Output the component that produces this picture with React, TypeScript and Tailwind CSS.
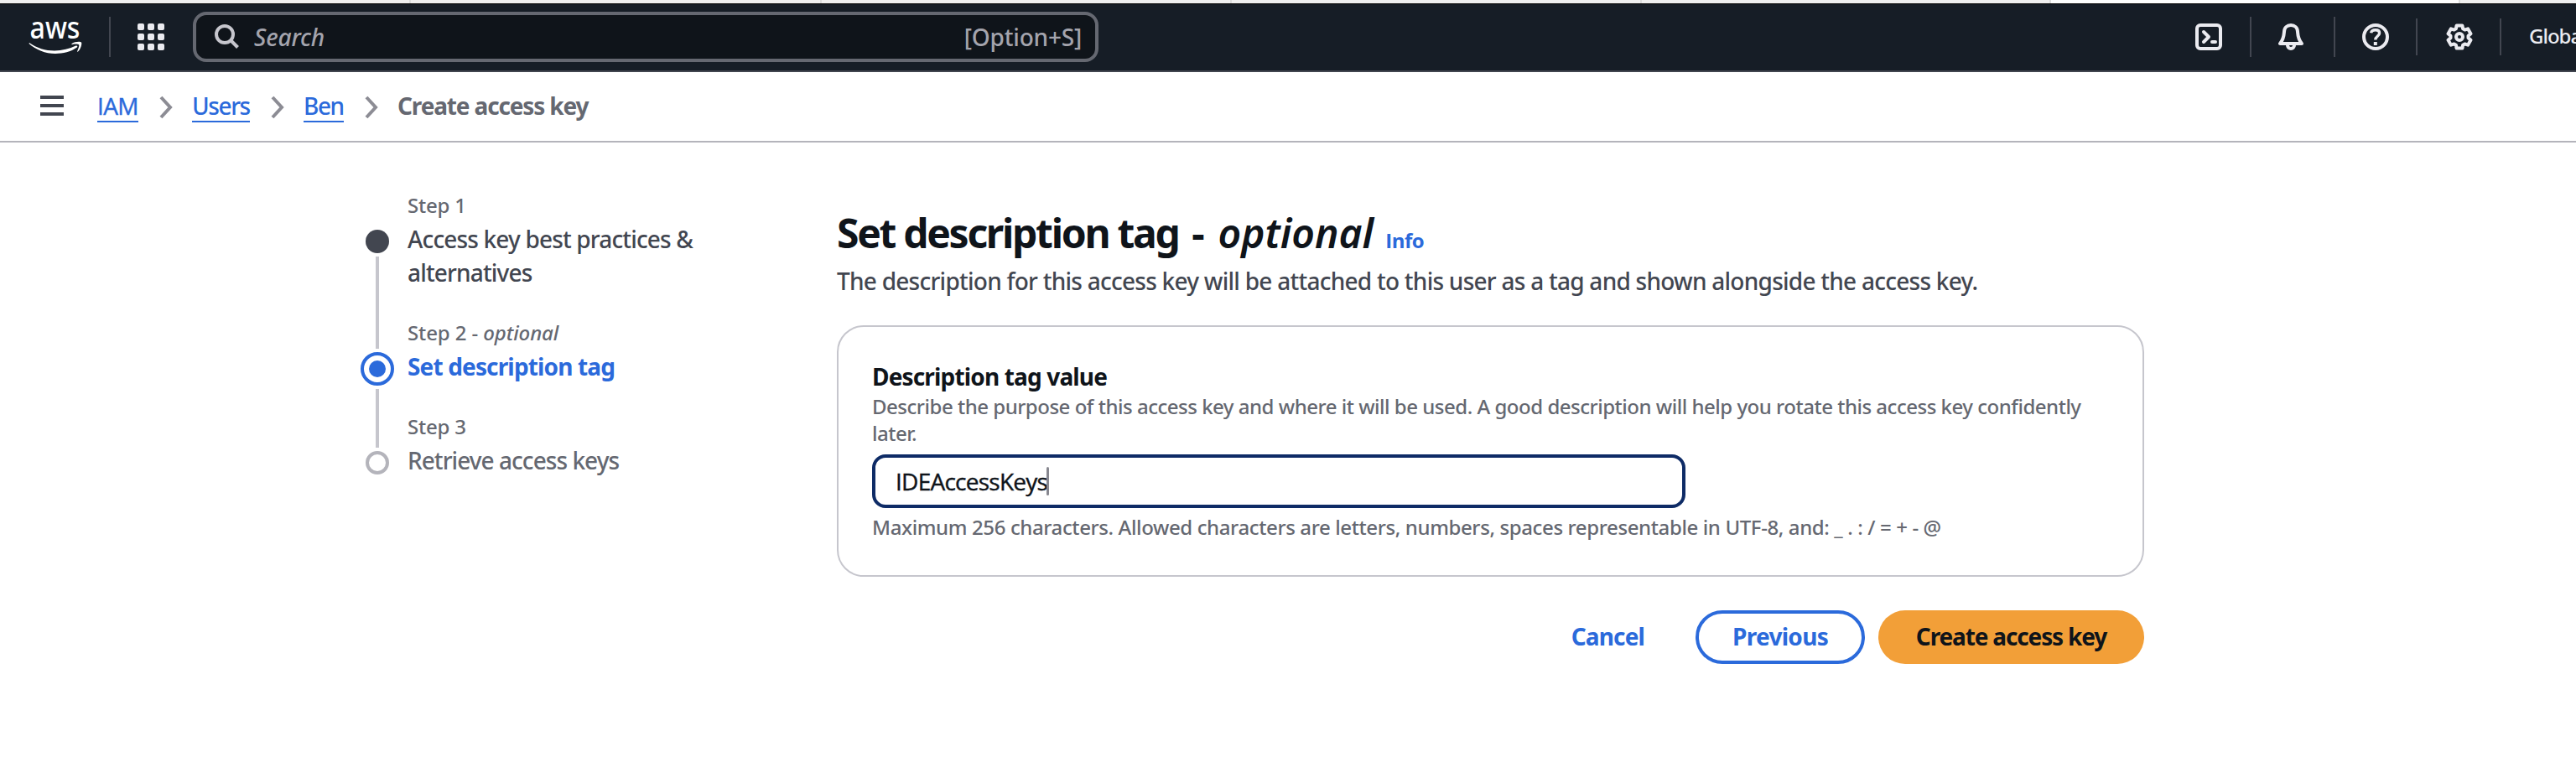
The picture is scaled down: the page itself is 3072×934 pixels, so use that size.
import type { ReactNode } from "react";

const GEAR = Array.from({ length: 6 }, (_, i) => {
  const base = (i * 60 - 90) * (Math.PI / 180);
  const at = (deg: number, r: number) => {
    const a = base + (deg * Math.PI) / 180;
    return `${(16 + r * Math.cos(a)).toFixed(2)} ${(16 + r * Math.sin(a)).toFixed(2)}`;
  };
  return [at(-23, 10.6), at(-14, 14), at(14, 14), at(23, 10.6)].join(" L");
}).join(" L");

function AwsLogo() {
  return (
    <svg width="66" height="58" viewBox="0 -16 66 58" className="overflow-visible text-white">
      <text
        x="1.5"
        y="21.5"
        textLength="60"
        lengthAdjust="spacingAndGlyphs"
        fill="currentColor"
        className="font-['Noto_Sans',sans-serif] text-[36px] font-medium"
      >
        aws
      </text>
      <path
        d="M1 27C10 33.5 20 36.5 31 36.5C40 36.5 49 34.3 56.5 30.6C58 30 59 31.5 57.8 32.6C50.5 38 41 40 32 40C20 40 9 35.5 0.5 28Z"
        fill="currentColor"
      />
      <path
        d="M51.5 28.2C55 25.5 62 25.2 63 26.5C64 28 62.5 34.5 59 37.5C58.4 38 57.8 37.7 58.2 36.9C59.2 34.5 60.8 30.5 60.2 29.4C59.5 28.2 55 28.5 52.2 28.9C51.3 29 51 28.6 51.5 28.2Z"
        fill="currentColor"
      />
    </svg>
  );
}

function GridIcon() {
  const steps = [0, 12, 24];
  return (
    <svg width="32" height="32" viewBox="0 0 32 32" fill="#ebebf0">
      {steps.map((y) => steps.map((x) => <rect key={`${x}-${y}`} x={x} y={y} width="8" height="8" rx="2" />))}
    </svg>
  );
}

function Stroke({ width = 32, children }: { width?: number; children: ReactNode }) {
  return (
    <svg
      width={width}
      height="32"
      viewBox={`0 0 ${width} 32`}
      fill="none"
      stroke="#ebebf0"
      strokeWidth="4"
      strokeLinejoin="round"
      strokeLinecap="round"
      className="shrink-0"
    >
      {children}
    </svg>
  );
}

function Chevron() {
  return (
    <svg width="16" height="28" viewBox="0 0 16 28" fill="none" stroke="#8c8c94" strokeWidth="4" className="mr-[23px] ml-[25px] mt-0.5 shrink-0">
      <path d="M2 2L13 14L2 26" />
    </svg>
  );
}

function Divider({ short = false }: { short?: boolean }) {
  return <div className={short ? "h-11 w-0.5 bg-[#424650]" : "h-12 w-0.5 bg-[#424650]"} />;
}

function BrowserStrip() {
  return (
    <div className="flex h-1 bg-[#efefef]">
      <div className="w-[490px] border-r-2 border-[#dcdcdc]" />
      <div className="w-[490px] border-r-2 border-[#dcdcdc]" />
      <div className="w-[489px] border-r-2 border-[#dcdcdc]" />
      <div className="w-[489px] border-r-2 border-[#dcdcdc]" />
      <div className="w-[488px] border-r-2 border-[#dcdcdc]" />
      <div className="w-[488px] border-r-2 border-[#dcdcdc] bg-[#fdfdfd]" />
    </div>
  );
}

function TopBar() {
  return (
    <header className="h-[82px] border-t border-b-2 border-t-black border-b-[#424650] bg-[#161d26]">
      <div className="flex h-[78px] items-center justify-between">
        <div className="flex items-center">
          <div className="ml-[34px] w-[96px] pb-3.5">
            <AwsLogo />
          </div>
          <Divider />
          <div className="mr-[34px] ml-8">
            <GridIcon />
          </div>
          <div className="flex h-[60px] w-[1080px] items-center justify-between rounded-2xl border-4 border-[#656871] bg-[#0f141a] pr-4 pl-[22px] text-[28px] leading-[40px] font-medium text-[#a4a4ad]">
            <div className="flex items-center">
              <svg width="30" height="30" viewBox="0 0 30 30" fill="none" stroke="#c6c6cd" strokeWidth="4">
                <circle cx="12" cy="12" r="10" />
                <path d="M19 19L27.5 27.5" />
              </svg>
              <span className="ml-[17px] tracking-[-0.15px] italic">Search</span>
            </div>
            <span className="tracking-[-0.2px]">[Option+S]</span>
          </div>
        </div>
        <div className="flex w-[454px] items-center overflow-hidden">
          <Stroke>
            <rect x="2" y="2" width="28" height="28" rx="4" />
            <path d="M10 10L16 16L10 22M20 22H24" />
          </Stroke>
          <div className="mr-8 ml-[33px]">
            <Divider />
          </div>
          <Stroke width={30}>
            <path d="M2 24H28C24.5 20 23.5 17 23 10C23 5 19.5 2 15 2C10.5 2 7 5 7 10C6.5 17 5.5 20 2 24Z" />
            <path d="M11 26a4 4 0 0 0 8 0" />
          </Stroke>
          <div className="mr-8 ml-9">
            <Divider />
          </div>
          <Stroke>
            <circle cx="16" cy="16" r="14" />
            <path d="M10.6 11.2C11 9 13 7.8 15.8 7.8C19 7.8 20.6 9.3 20.6 11.5C20.6 15 15.8 15 15.8 19.5" strokeWidth="3.4" strokeLinecap="butt" />
            <path d="M13.8 24H17.8" strokeLinecap="butt" />
          </Stroke>
          <div className="mr-[34px] ml-8">
            <Divider short />
          </div>
          <Stroke>
            <path d={`M${GEAR}Z`} />
            <circle cx="16" cy="16" r="4" />
          </Stroke>
          <div className="mr-[33px] ml-8">
            <Divider short />
          </div>
          <span className="pb-0.5 text-[24px] leading-8 font-medium tracking-[-1px] whitespace-nowrap text-[#ebebf0]">Global</span>
        </div>
      </div>
    </header>
  );
}

function Crumb({ label, className }: { label: string; className: string }) {
  return (
    <a className={`border-b-2 border-[#2b6adb] text-[28px] leading-[36px] whitespace-nowrap text-[#2b6adb] ${className}`}>
      {label}
    </a>
  );
}

function Breadcrumbs() {
  return (
    <nav className="flex h-[84px] items-center border-b-2 border-[#b4b4bb] bg-white pl-12">
      <div className="mb-0.5 flex w-7 flex-col gap-1.5">
        <div className="h-1 bg-[#424650]" />
        <div className="h-1 bg-[#424650]" />
        <div className="h-1 bg-[#424650]" />
      </div>
      <div className="ml-10 flex items-center">
        <Crumb label="IAM" className="w-[49px] font-['Open_Sans',sans-serif] tracking-[-0.6px] [-webkit-text-stroke:0.4px]" />
        <Chevron />
        <Crumb label="Users" className="w-[69px] font-medium tracking-[-1.4px]" />
        <Chevron />
        <Crumb label="Ben" className="w-[48px] font-medium tracking-[-1.4px]" />
        <Chevron />
        <span className="border-b-2 border-transparent text-[28px] leading-[36px] font-bold tracking-[-1.15px] text-[#656871]">
          Create access key
        </span>
      </div>
    </nav>
  );
}

function Steps() {
  return (
    <aside className="flex w-[568px] gap-4 pt-[59px]">
      <div className="flex w-10 flex-col items-center gap-1 pt-[45px]">
        <div className="size-7 rounded-full bg-[#424650]" />
        <div className="h-[110px] w-1 bg-[#c6c6cd]" />
        <div className="flex size-10 items-center justify-center rounded-full border-4 border-[#2b6adb]">
          <div className="size-5 rounded-full bg-[#2b6adb]" />
        </div>
        <div className="h-[70px] w-1 bg-[#c6c6cd]" />
        <div className="size-7 rounded-full border-4 border-[#b4b4bb]" />
      </div>
      <div className="flex w-[380px] flex-col gap-9">
        <div>
          <div className="mb-1 text-[24px] leading-8 font-medium tracking-[-0.2px] text-[#656871]">Step 1</div>
          <div className="text-[28px] leading-[40px] font-medium tracking-[-0.84px] text-[#424650]">
            Access key best practices &amp; alternatives
          </div>
        </div>
        <div>
          <div className="mb-1 text-[24px] leading-8 font-medium tracking-[-0.1px] text-[#656871]">
            Step 2 - <i>optional</i>
          </div>
          <div className="text-[28px] leading-[40px] font-bold tracking-[-0.85px] text-[#2b6adb]">Set description tag</div>
        </div>
        <div>
          <div className="mb-1 text-[24px] leading-8 font-medium tracking-[-0.2px] text-[#656871]">Step 3</div>
          <div className="text-[28px] leading-[40px] font-medium tracking-[-0.95px] text-[#656871]">Retrieve access keys</div>
        </div>
      </div>
    </aside>
  );
}

function DescriptionForm() {
  return (
    <section className="w-[1559px] pt-[78px]">
      <h1 className="flex items-baseline text-[48px] leading-[60px] text-[#0f141a]">
        <span className="font-bold tracking-[-2.3px]">Set description tag</span>
        <span className="w-[47px] text-center font-bold">-</span>
        <i className="font-semibold">optional</i>
        <a className="ml-[14px] font-['Open_Sans',sans-serif] text-[24px] leading-8 font-bold tracking-[-0.5px] text-[#2b6adb]">
          Info
        </a>
      </h1>
      <p className="mt-[7px] text-[28px] leading-[40px] font-medium tracking-[-0.745px] whitespace-nowrap text-[#424650]">
        The description for this access key will be attached to this user as a tag and shown alongside the access key.
      </p>
      <div className="mt-[33px] h-[300px] rounded-[32px] border-2 border-[#c6c6cd] bg-white px-10 pt-[39px]">
        <label className="block text-[28px] leading-[40px] font-bold tracking-[-0.84px] text-[#0f141a]">Description tag value</label>
        <p className="text-[24px] leading-8 font-medium tracking-[-0.485px] text-[#656871]">
          Describe the purpose of this access key and where it will be used. A good description will help you rotate this
          access key confidently later.
        </p>
        <div className="mt-[9px] flex h-16 w-[970px] items-center rounded-2xl border-4 border-[#0e2b66] pl-6 font-['Open_Sans',sans-serif] text-[28px] leading-[40px] text-[#0f141a]">
          <span className="tracking-[-0.75px] [-webkit-text-stroke:0.4px]">IDEAccessKeys</span>
          <span className="-ml-px h-[34px] w-[3px] rounded-full bg-[#87878f]" />
        </div>
        <p className="mt-[7px] text-[24px] leading-8 font-medium tracking-[-0.38px] whitespace-nowrap text-[#656871]">
          Maximum 256 characters. Allowed characters are letters, numbers, spaces representable in UTF-8, and: _ . : / = + - @
        </p>
      </div>
      <div className="mt-10 flex justify-end text-[28px] leading-[40px] font-bold">
        <button className="mr-[61px] h-16 pb-0.5 tracking-[-0.85px] text-[#2b6adb]">Cancel</button>
        <button className="mr-4 h-16 w-[202px] rounded-full border-4 border-[#2b6adb] bg-white pb-0.5 tracking-[-0.7px] text-[#2b6adb]">
          Previous
        </button>
        <button className="h-16 w-[317px] rounded-full bg-[#f29f38] pb-0.5 tracking-[-1.15px] text-[#0f141a]">
          Create access key
        </button>
      </div>
    </section>
  );
}

export default function App() {
  return (
    <div className="h-[934px] w-[3072px] overflow-hidden bg-white font-['Noto_Sans',sans-serif]">
      <BrowserStrip />
      <TopBar />
      <Breadcrumbs />
      <main className="flex pl-[430px]">
        <Steps />
        <DescriptionForm />
      </main>
    </div>
  );
}
